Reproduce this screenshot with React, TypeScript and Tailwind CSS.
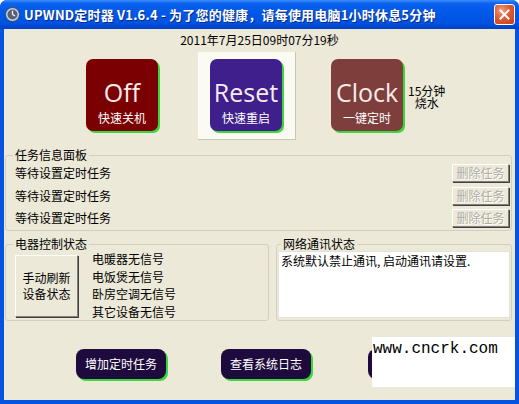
import React from "react";

const CJK = "font-['Noto_Sans_CJK_SC',sans-serif]";

function BigBtn({ bg, title, sub }: { bg: string; title: string; sub: string }) {
  return (
    <div
      className={`w-[72px] h-[72px] rounded-[7px] shadow-[2px_2px_0_#3bd63b] flex flex-col items-center ${bg}`}
    >
      <div className="pt-[20px] h-[46px] text-[25px] leading-[26px] text-[#f6ecec] font-['Open_Sans',sans-serif]">
        {title}
      </div>
      <div className={`mt-[6px] text-[12px] leading-[14px] text-white ${CJK}`}>{sub}</div>
    </div>
  );
}

function PillBtn({ label }: { label: string }) {
  return (
    <div
      className={`w-[90px] h-[30px] rounded-[8px] bg-[#1e0a3c] shadow-[2px_2px_0_#3bd63b] flex items-center justify-center text-white text-[12px] leading-[14px] ${CJK}`}
    >
      {label}
    </div>
  );
}

function DelBtn() {
  return (
    <div
      className={`w-[57px] h-[18px] border border-t-white border-l-white border-b-[#808080] border-r-[#808080] shadow-[1px_1px_0_#404040] flex items-center justify-center text-[12px] leading-[14px] text-[#aeada1] [text-shadow:1px_1px_0_#ffffff] ${CJK}`}
    >
      删除任务
    </div>
  );
}

function ClockIcon() {
  return (
    <svg width="15" height="15" viewBox="0 0 15 15">
      <circle cx="7.5" cy="7.5" r="7" fill="#c8d0e0" stroke="#3a4660" strokeWidth="1" />
      <circle cx="7.5" cy="7.5" r="5" fill="#56607a" />
      <line x1="7.5" y1="7.5" x2="7.5" y2="3.8" stroke="#ffffff" strokeWidth="1.3" />
      <line x1="7.5" y1="7.5" x2="10" y2="9" stroke="#ffffff" strokeWidth="1.3" />
    </svg>
  );
}

export default function App() {
  return (
    <div className="w-[519px] h-[404px] flex flex-col bg-[#0553e1] overflow-hidden rounded-t-[7px]">
      {/* Title bar */}
      <div className="h-[29px] shrink-0 flex items-center bg-[linear-gradient(to_bottom,#3d8dff_0%,#0a62ee_12%,#0057e8_45%,#0052e0_80%,#0041c4_100%)]">
        <div className="ml-[5px] w-[15px] h-[15px]">
          <ClockIcon />
        </div>
        <div
          className={`ml-[4px] text-white font-bold text-[13px] leading-[16px] tracking-[0.2px] whitespace-nowrap [text-shadow:1px_1px_0_#0a2a80] ${CJK}`}
        >
          UPWND定时器 V1.6.4 - 为了您的健康，请每使用电脑1小时休息5分钟
        </div>
        <div className="ml-auto mr-[4px] w-[21px] h-[21px] rounded-[3px] border border-white bg-[radial-gradient(circle_at_35%_30%,#f0a080_0%,#e05a32_45%,#c33d18_100%)] flex items-center justify-center">
          <svg width="11" height="11" viewBox="0 0 11 11">
            <path d="M1.5 1.5 L9.5 9.5 M9.5 1.5 L1.5 9.5" stroke="#ffffff" strokeWidth="2" strokeLinecap="square" />
          </svg>
        </div>
      </div>

      {/* Client area */}
      <div className="relative flex-1 mx-[4px] mb-[4px] bg-[#ece9d8] flex flex-col text-black">
        <div className={`mt-[5px] h-[12px] text-center text-[12px] leading-[12px] ${CJK}`}>
          2011年7月25日09时07分19秒
        </div>

        {/* big buttons row */}
        <div className="mt-[6px] flex items-start">
          <div className="ml-[82px] mt-[7px]">
            <BigBtn bg="bg-[#7b0002]" title="Off" sub="快速关机" />
          </div>
          <div className="ml-[40px] w-[98px] h-[88px] bg-[#fcfbf3] border-r border-b border-[#c8c5b6] pl-[12px] pt-[7px]">
            <BigBtn bg="bg-[#3e1f8b]" title="Reset" sub="快速重启" />
          </div>
          <div className="ml-[35px] mt-[7px]">
            <BigBtn bg="bg-[#7e3e3b]" title="Clock" sub="一键定时" />
          </div>
          <div className={`ml-[5px] mt-[33px] text-center text-[12px] leading-[12px] ${CJK}`}>
            15分钟
            <br />
            烧水
          </div>
        </div>

        {/* task group */}
        <fieldset className="mt-[8px] ml-[1px] mr-[3px] border border-[#d0d0bf] rounded-[3px] pl-[9px] pr-[2px] pb-[3px]">
          <legend className={`-ml-[2px] px-[2px] text-[12px] leading-[14px] ${CJK}`}>任务信息面板</legend>
          <div className="pt-[2px] flex flex-col">
            {[0, 1, 2].map((i) => (
              <div
                key={i}
                className={`h-[18px] flex items-center justify-between ${i === 1 ? "mt-[5px]" : i === 2 ? "mt-[4px]" : ""}`}
              >
                <span className={`text-[12px] leading-[14px] ${CJK}`}>等待设置定时任务</span>
                <DelBtn />
              </div>
            ))}
          </div>
        </fieldset>

        {/* device / network groups */}
        <div className="mt-[6px] ml-[1px] mr-[3px] flex gap-[7px]">
          <fieldset className="w-[264px] h-[84px] border border-[#d0d0bf] rounded-[3px] pl-[9px] pb-[4px]">
            <legend className={`-ml-[2px] px-[2px] text-[12px] leading-[14px] ${CJK}`}>电器控制状态</legend>
            <div className="flex items-start">
              <div
                className={`mt-[4px] w-[63px] h-[62px] bg-[#ece9d8] border border-t-white border-l-white border-b-[#808080] border-r-[#808080] shadow-[1px_1px_0_#404040] flex flex-col items-center justify-center text-[12px] leading-[16px] ${CJK}`}
              >
                <div>手动刷新</div>
                <div>设备状态</div>
              </div>
              <div className={`ml-[14px] -mt-[1px] flex flex-col text-[12px] leading-[17.5px] ${CJK}`}>
                <div>电暖器无信号</div>
                <div>电饭煲无信号</div>
                <div>卧房空调无信号</div>
                <div>其它设备无信号</div>
              </div>
            </div>
          </fieldset>
          <fieldset className="flex-1 h-[84px] border border-[#d0d0bf] rounded-[3px] px-[1px] pb-[1px]">
            <legend className={`ml-[3px] px-[2px] text-[12px] leading-[14px] ${CJK}`}>网络通讯状态</legend>
            <div
              className={`h-[67px] bg-white border border-[#e4e2d6] px-[2px] pt-[2px] text-[12px] leading-[14px] ${CJK}`}
            >
              系统默认禁止通讯, 启动通讯请设置.
            </div>
          </fieldset>
        </div>

        {/* bottom buttons */}
        <div className="mt-[28px] flex">
          <div className="ml-[72px]">
            <PillBtn label="增加定时任务" />
          </div>
          <div className="ml-[55px]">
            <PillBtn label="查看系统日志" />
          </div>
          <div className="ml-[57px]">
            <PillBtn label="" />
          </div>
        </div>

        {/* watermark overlay */}
        <div className="absolute left-[368px] top-[308px] w-[143px] h-[50px] bg-white">
          <div className="pl-[1px] pt-[3px] text-[16px] leading-[18px] text-black font-['Liberation_Mono',monospace]">
            www.cncrk.com
          </div>
        </div>
      </div>
    </div>
  );
}
